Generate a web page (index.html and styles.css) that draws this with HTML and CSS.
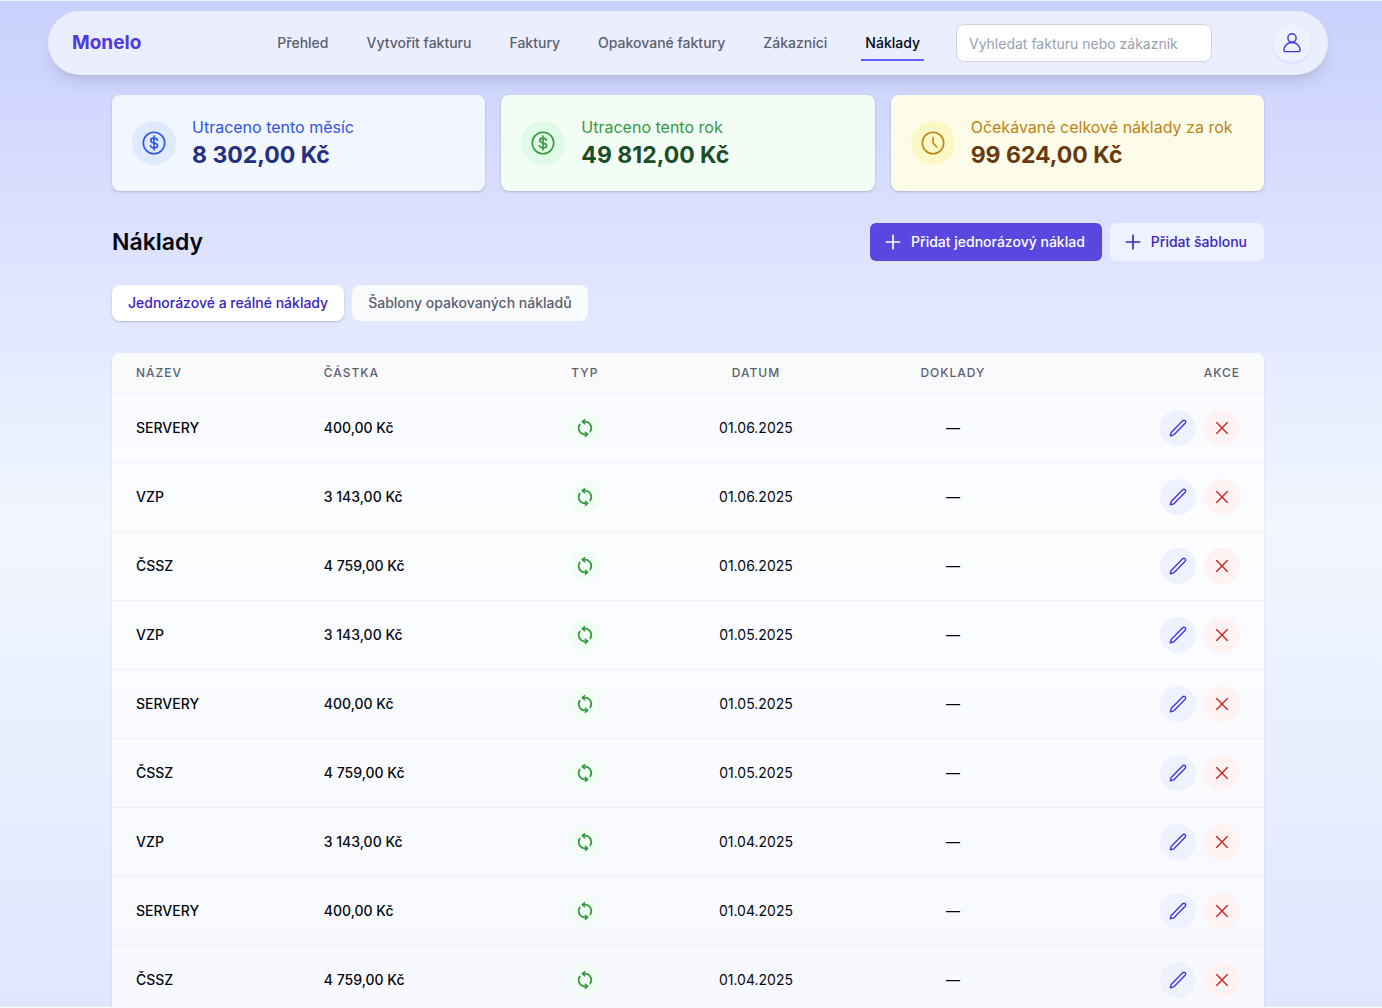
FILE: index.html
```
<!DOCTYPE html>
<html lang="cs">
<head>
	<meta charset="utf-8">
	<meta name="viewport" content="width=device-width, initial-scale=1">
	<title>Monelo - Náklady</title>
	<link rel="stylesheet" href="styles.css">
</head>
<body>

<!-- icons used more than once -->
<svg class="sprite" aria-hidden="true">
	<symbol id="i-dollar" viewBox="0 0 24 24">
		<circle cx="12" cy="12" r="10.7"/>
		<path d="M12 5v14M15.400 9.200c-.3-1.300-1.500-2.100-3.400-2.100s-3.300.9-3.300 2.400c0 3.300 6.900 1.500 6.900 5 0 1.500-1.500 2.400-3.500 2.400s-3.500-.9-3.700-2.400"/>
	</symbol>
	<symbol id="i-clock" viewBox="0 0 24 24">
		<circle cx="12" cy="12" r="10.7"/>
		<path d="M12 6.500V12l3.800 4"/>
	</symbol>
	<symbol id="i-plus" viewBox="0 0 24 24">
		<path d="M12 4v16M4 12h16"/>
	</symbol>
	<symbol id="i-sync" viewBox="0 0 24 24">
		<path d="M9 4.400h3A7.600 7.600 0 0 1 18.300 16.200M15 19.600h-3A7.600 7.600 0 0 1 5.700 7.800"/>
		<path d="M11.500 2.100L9 4.400l2.500 2.300M12.500 21.900l2.500-2.300-2.500-2.300"/>
	</symbol>
	<symbol id="i-edit" viewBox="0 0 24 24">
		<path d="M17.600 3.400a2.100 2.100 0 0 1 3 3L6.800 20.300l-4 1 1-4z"/>
	</symbol>
	<symbol id="i-cross" viewBox="0 0 24 24">
		<path d="M5.500 5.500l13 13M18.500 5.500l-13 13"/>
	</symbol>
</svg>

<div class="page">

	<header class="topbar">
		<a href="#" class="logo">Monelo</a>
		<nav class="menu">
			<a href="#">Přehled</a>
			<a href="#">Vytvořit fakturu</a>
			<a href="#">Faktury</a>
			<a href="#">Opakované faktury</a>
			<a href="#">Zákazníci</a>
			<a href="#" class="active">Náklady</a>
		</nav>
		<input type="search" class="search" placeholder="Vyhledat fakturu nebo zákazník" aria-label="Vyhledat fakturu nebo zákazníka">
		<button type="button" class="user" aria-label="Uživatel">
			<svg viewBox="0 0 24 24"><circle cx="12" cy="6.500" r="4.500"/><path d="M3.200 20C3.200 15 7 11.500 12 11.500s8.800 3.500 8.800 8.500c0 .8-.5 1.400-1.300 1.400h-15c-.8 0-1.300-.6-1.300-1.400z"/></svg>
		</button>
	</header>

	<main class="content">

		<section class="stats">
			<div class="stat blue">
				<span class="stat-icon"><svg><use href="#i-dollar"/></svg></span>
				<div>
					<p class="stat-label">Utraceno tento měsíc</p>
					<p class="stat-value">8 302,00 Kč</p>
				</div>
			</div>
			<div class="stat green">
				<span class="stat-icon"><svg><use href="#i-dollar"/></svg></span>
				<div>
					<p class="stat-label">Utraceno tento rok</p>
					<p class="stat-value">49 812,00 Kč</p>
				</div>
			</div>
			<div class="stat yellow">
				<span class="stat-icon"><svg><use href="#i-clock"/></svg></span>
				<div>
					<p class="stat-label">Očekávané celkové náklady za rok</p>
					<p class="stat-value">99 624,00 Kč</p>
				</div>
			</div>
		</section>

		<div class="heading">
			<h1>Náklady</h1>
			<div class="actions">
				<button type="button" class="btn primary"><svg><use href="#i-plus"/></svg>Přidat jednorázový náklad</button>
				<button type="button" class="btn light"><svg><use href="#i-plus"/></svg>Přidat šablonu</button>
			</div>
		</div>

		<div class="tabs">
			<button type="button" class="tab active">Jednorázové a reálné náklady</button>
			<button type="button" class="tab">Šablony opakovaných nákladů</button>
		</div>

		<div class="table-box">
			<table class="costs">
				<colgroup>
					<col class="col-name">
					<col class="col-amount">
					<col class="col-type">
					<col class="col-date">
					<col class="col-docs">
					<col class="col-actions">
				</colgroup>
				<thead>
					<tr>
						<th>Název</th>
						<th>Částka</th>
						<th class="center">Typ</th>
						<th class="center">Datum</th>
						<th class="center">Doklady</th>
						<th class="right">Akce</th>
					</tr>
				</thead>
				<tbody id="rows"></tbody>
			</table>
		</div>

	</main>
</div>

<script src="costs.js"></script>
</body>
</html>
```

FILE: styles.css
```
* {
	box-sizing: border-box;
}
body {
	margin: 0;
	font-family: Inter, "Liberation Sans", sans-serif;
	font-size: 14px;
	line-height: 20px;
	color: #030712;
}
h1, p {
	margin: 0;
}
button, input {
	font: inherit;
}
button {
	border: 0;
	cursor: pointer;
}
a {
	text-decoration: none;
}
svg {
	display: block;
	fill: none;
	stroke: currentColor;
	stroke-width: 1.6;
	stroke-linecap: round;
	stroke-linejoin: round;
}
.sprite {
	display: none;
}

.page {
	height: 100vh;
	overflow-y: auto;
	scrollbar-width: none;
	border-top: 1px solid #eef2fb;
	border-bottom: 1px solid #f8faff;
	background: linear-gradient(to bottom, #c9d1fd 0%, #e0e4ff 27%, #f1f6ff 52%, #e0e6fe 100%);
}

/* top bar */
.topbar {
	display: flex;
	align-items: center;
	height: 64px;
	max-width: 1280px;
	margin: 10px 54px 0 48px;
	padding: 0 17px 0 24px;
	border-radius: 32px;
	background: #ebeeff;
	box-shadow: 0 10px 15px -3px rgba(0,0,0,.1), 0 4px 6px -4px rgba(0,0,0,.1);
}
.logo {
	font-size: 19px;
	font-weight: 700;
	line-height: 28px;
	color: #4f39e0;
}
.menu {
	display: flex;
	gap: 30px;
	margin-left: auto;
}
.menu a {
	padding: 8px 4px 6px;
	border-bottom: 2px solid transparent;
	font-weight: 500;
	color: #5b6070;
}
.menu a.active {
	color: #030712;
	border-color: #615fff;
}
.search {
	width: 256px;
	height: 38px;
	margin: 0 61px 0 32px;
	padding: 0 12px;
	border: 1px solid #d1d5dc;
	border-radius: 8px;
	background: #fff;
	appearance: none;
}
.search::placeholder {
	color: #99a1af;
	opacity: 1;
}
.user {
	display: flex;
	align-items: center;
	justify-content: center;
	width: 38px;
	height: 38px;
	padding: 0;
	border-radius: 50%;
	background: #eef1ff;
	color: #4a35d8;
	box-shadow: 0 1px 3px rgba(80,90,200,.15);
}
.user svg {
	width: 22px;
	height: 22px;
}

.content {
	max-width: 1152px;
	margin: 20px 118px 0 112px;
}

/* summary cards */
.stats {
	display: grid;
	grid-template-columns: repeat(3, 1fr);
	gap: 16px;
}
.stat {
	display: flex;
	align-items: center;
	gap: 16px;
	padding: 20px;
	border-radius: 8px;
	box-shadow: 0 1px 3px rgba(0,0,0,.1), 0 1px 2px rgba(0,0,0,.1);
}
.stat-icon {
	padding: 10px;
	border-radius: 50%;
}
.stat-icon svg {
	width: 24px;
	height: 24px;
}
.stat-label {
	font-size: 16px;
	line-height: 24px;
}
.stat-value {
	font-size: 23px;
	font-weight: 700;
	line-height: 32px;
}
.blue { background: #f2f6ff; color: #2f55e4; }
.blue .stat-icon { background: #dfeafd; }
.blue .stat-value { color: #22317f; }
.green { background: #f2fdf5; color: #35993f; }
.green .stat-icon { background: #e0fae8; }
.green .stat-value { color: #1c4d29; }
.yellow { background: #fdfce8; color: #bd8316; }
.yellow .stat-icon { background: #fcf8c5; }
.yellow .stat-value { color: #673a12; }

/* heading with buttons */
.heading {
	display: flex;
	align-items: center;
	justify-content: space-between;
	margin: 32px 0 24px;
}
h1 {
	font-size: 23px;
	font-weight: 600;
	line-height: 32px;
}
.actions, .tabs {
	display: flex;
	gap: 8px;
}
.btn {
	display: flex;
	align-items: center;
	gap: 8px;
	padding: 9px 17px 9px 13px;
	border-radius: 6px;
	font-weight: 500;
}
.btn svg {
	width: 20px;
	height: 20px;
	stroke-width: 2;
}
.btn.primary {
	background: #5947df;
	color: #fff;
}
.btn.light {
	background: #eef1ff;
	color: #3d27bd;
}

.tab {
	padding: 8px 16px;
	border-radius: 8px;
	background: #f9fafc;
	font-weight: 500;
	color: #5b6070;
}
.tab.active {
	background: #fff;
	color: #3a22c4;
	box-shadow: 0 1px 3px rgba(0,0,0,.1), 0 1px 2px rgba(0,0,0,.1);
}

/* cost table */
.table-box {
	margin-top: 32px;
	border-radius: 8px;
	overflow: hidden;
	background: rgba(255,255,255,.75);
	box-shadow: 0 1px 3px rgba(0,0,0,.08);
}
.costs {
	width: 100%;
	table-layout: fixed;
	border-collapse: collapse;
}
.col-name { width: 16.3%; }
.col-amount { width: 18%; }
.col-type { width: 13.5%; }
.col-date { width: 16.2%; }
.col-docs { width: 18%; }
.costs th {
	padding: 12px 24px;
	background: #f9fafc;
	border-bottom: 1px solid #eceef4;
	font-size: 12px;
	font-weight: 500;
	line-height: 16px;
	letter-spacing: 1px;
	text-align: left;
	text-transform: uppercase;
	color: #5b6070;
}
.costs td {
	padding: 16px 24px;
	border-bottom: 1px solid #eceffd;
}
.costs .strong {
	font-weight: 500;
}
.costs .center {
	text-align: center;
}
.costs .right {
	text-align: right;
}
.type {
	display: inline-block;
	padding: 6px;
	border-radius: 50%;
	background: #f2fdf5;
	color: #35993f;
	vertical-align: middle;
}
.type svg {
	width: 20px;
	height: 20px;
	stroke-width: 2;
}
.row-actions {
	display: flex;
	justify-content: flex-end;
	gap: 8px;
}
.round {
	padding: 8px;
	border-radius: 50%;
}
.round svg {
	width: 20px;
	height: 20px;
}
.round.edit {
	background: #eff1fe;
	color: #4a2fe0;
}
.round.remove {
	background: #fef2f2;
	color: #c8221f;
}
```

FILE: costs.js
```
var costs = [
	['SERVERY', '400,00 Kč', '01.06.2025'],
	['VZP', '3 143,00 Kč', '01.06.2025'],
	['ČSSZ', '4 759,00 Kč', '01.06.2025'],
	['VZP', '3 143,00 Kč', '01.05.2025'],
	['SERVERY', '400,00 Kč', '01.05.2025'],
	['ČSSZ', '4 759,00 Kč', '01.05.2025'],
	['VZP', '3 143,00 Kč', '01.04.2025'],
	['SERVERY', '400,00 Kč', '01.04.2025'],
	['ČSSZ', '4 759,00 Kč', '01.04.2025']
];

function renderCosts() {
	var ret = [];
	for (var i = 0; i < costs.length; i++) {
		var c = costs[i];
		ret.push('<tr>' +
			'<td class="strong">' + c[0] + '</td>' +
			'<td class="strong">' + c[1] + '</td>' +
			'<td class="center"><span class="type"><svg><use href="#i-sync"/></svg></span></td>' +
			'<td class="center">' + c[2] + '</td>' +
			'<td class="center">—</td>' +
			'<td><div class="row-actions">' +
			'<button type="button" class="round edit" aria-label="Upravit"><svg><use href="#i-edit"/></svg></button>' +
			'<button type="button" class="round remove" aria-label="Smazat"><svg><use href="#i-cross"/></svg></button>' +
			'</div></td></tr>');
	}
	document.getElementById('rows').innerHTML = ret.join('');
}

renderCosts();
```
